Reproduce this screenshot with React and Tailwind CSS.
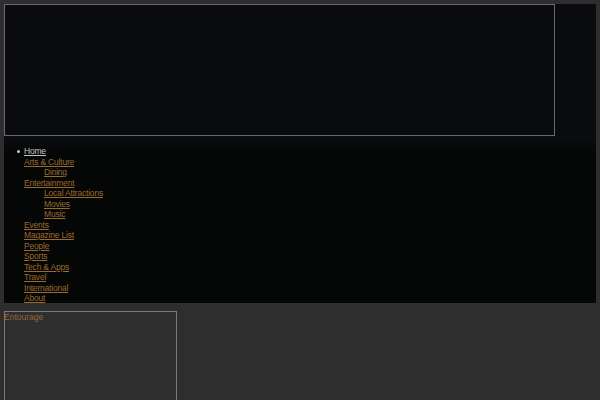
const links = [
  { label: "Home", level: 0, home: true },
  { label: "Arts & Culture", level: 0 },
  { label: "Dining", level: 1 },
  { label: "Entertainment", level: 0 },
  { label: "Local Attractions", level: 1 },
  { label: "Movies", level: 1 },
  { label: "Music", level: 1 },
  { label: "Events", level: 0 },
  { label: "Magazine List", level: 0 },
  { label: "People", level: 0 },
  { label: "Sports", level: 0 },
  { label: "Tech & Apps", level: 0 },
  { label: "Travel", level: 0 },
  { label: "International", level: 0 },
  { label: "About", level: 0 },
]

export default function App() {
  return (
    <div className="h-[400px] bg-[#2e2e2e] pt-[3px] font-['Liberation_Sans',Arial,sans-serif] overflow-hidden">
      <div className="mx-[4px] bg-[#0a0b0e]">
        <div className="w-[551px] h-[132px] border border-[#6a6a6a] bg-[#0a0b0e] mt-[1px]" />
        <div className="h-[167px] bg-gradient-to-b from-[#0b0c0e] to-[#050606] to-[12%] pt-[10px]">
          <ul className="text-[8.5px] leading-[10.5px] tracking-[-0.2px]">
            {links.map((l) => (
              <li
                key={l.label}
                className={l.level === 1 ? "pl-[40px]" : "pl-[20px]"}
              >
                {l.home && (
                  <span className="inline-block w-[3px] h-[3px] rounded-full bg-[#c8c8c8] -ml-[7px] mr-[4px] align-middle" />
                )}
                <a
                  href="#"
                  className={
                    l.home
                      ? "underline text-[#c4c4c4]"
                      : "underline text-[#9c6a2c]"
                  }
                >
                  {l.label}
                </a>
              </li>
            ))}
          </ul>
        </div>
      </div>
      <div className="mt-[8px] ml-[4px] w-[173px] h-[100px] border border-[#7a7a7a]">
        <div className="text-[8.5px] leading-[11px] text-[#94683a] -ml-px">Entourage</div>
      </div>
    </div>
  )
}
